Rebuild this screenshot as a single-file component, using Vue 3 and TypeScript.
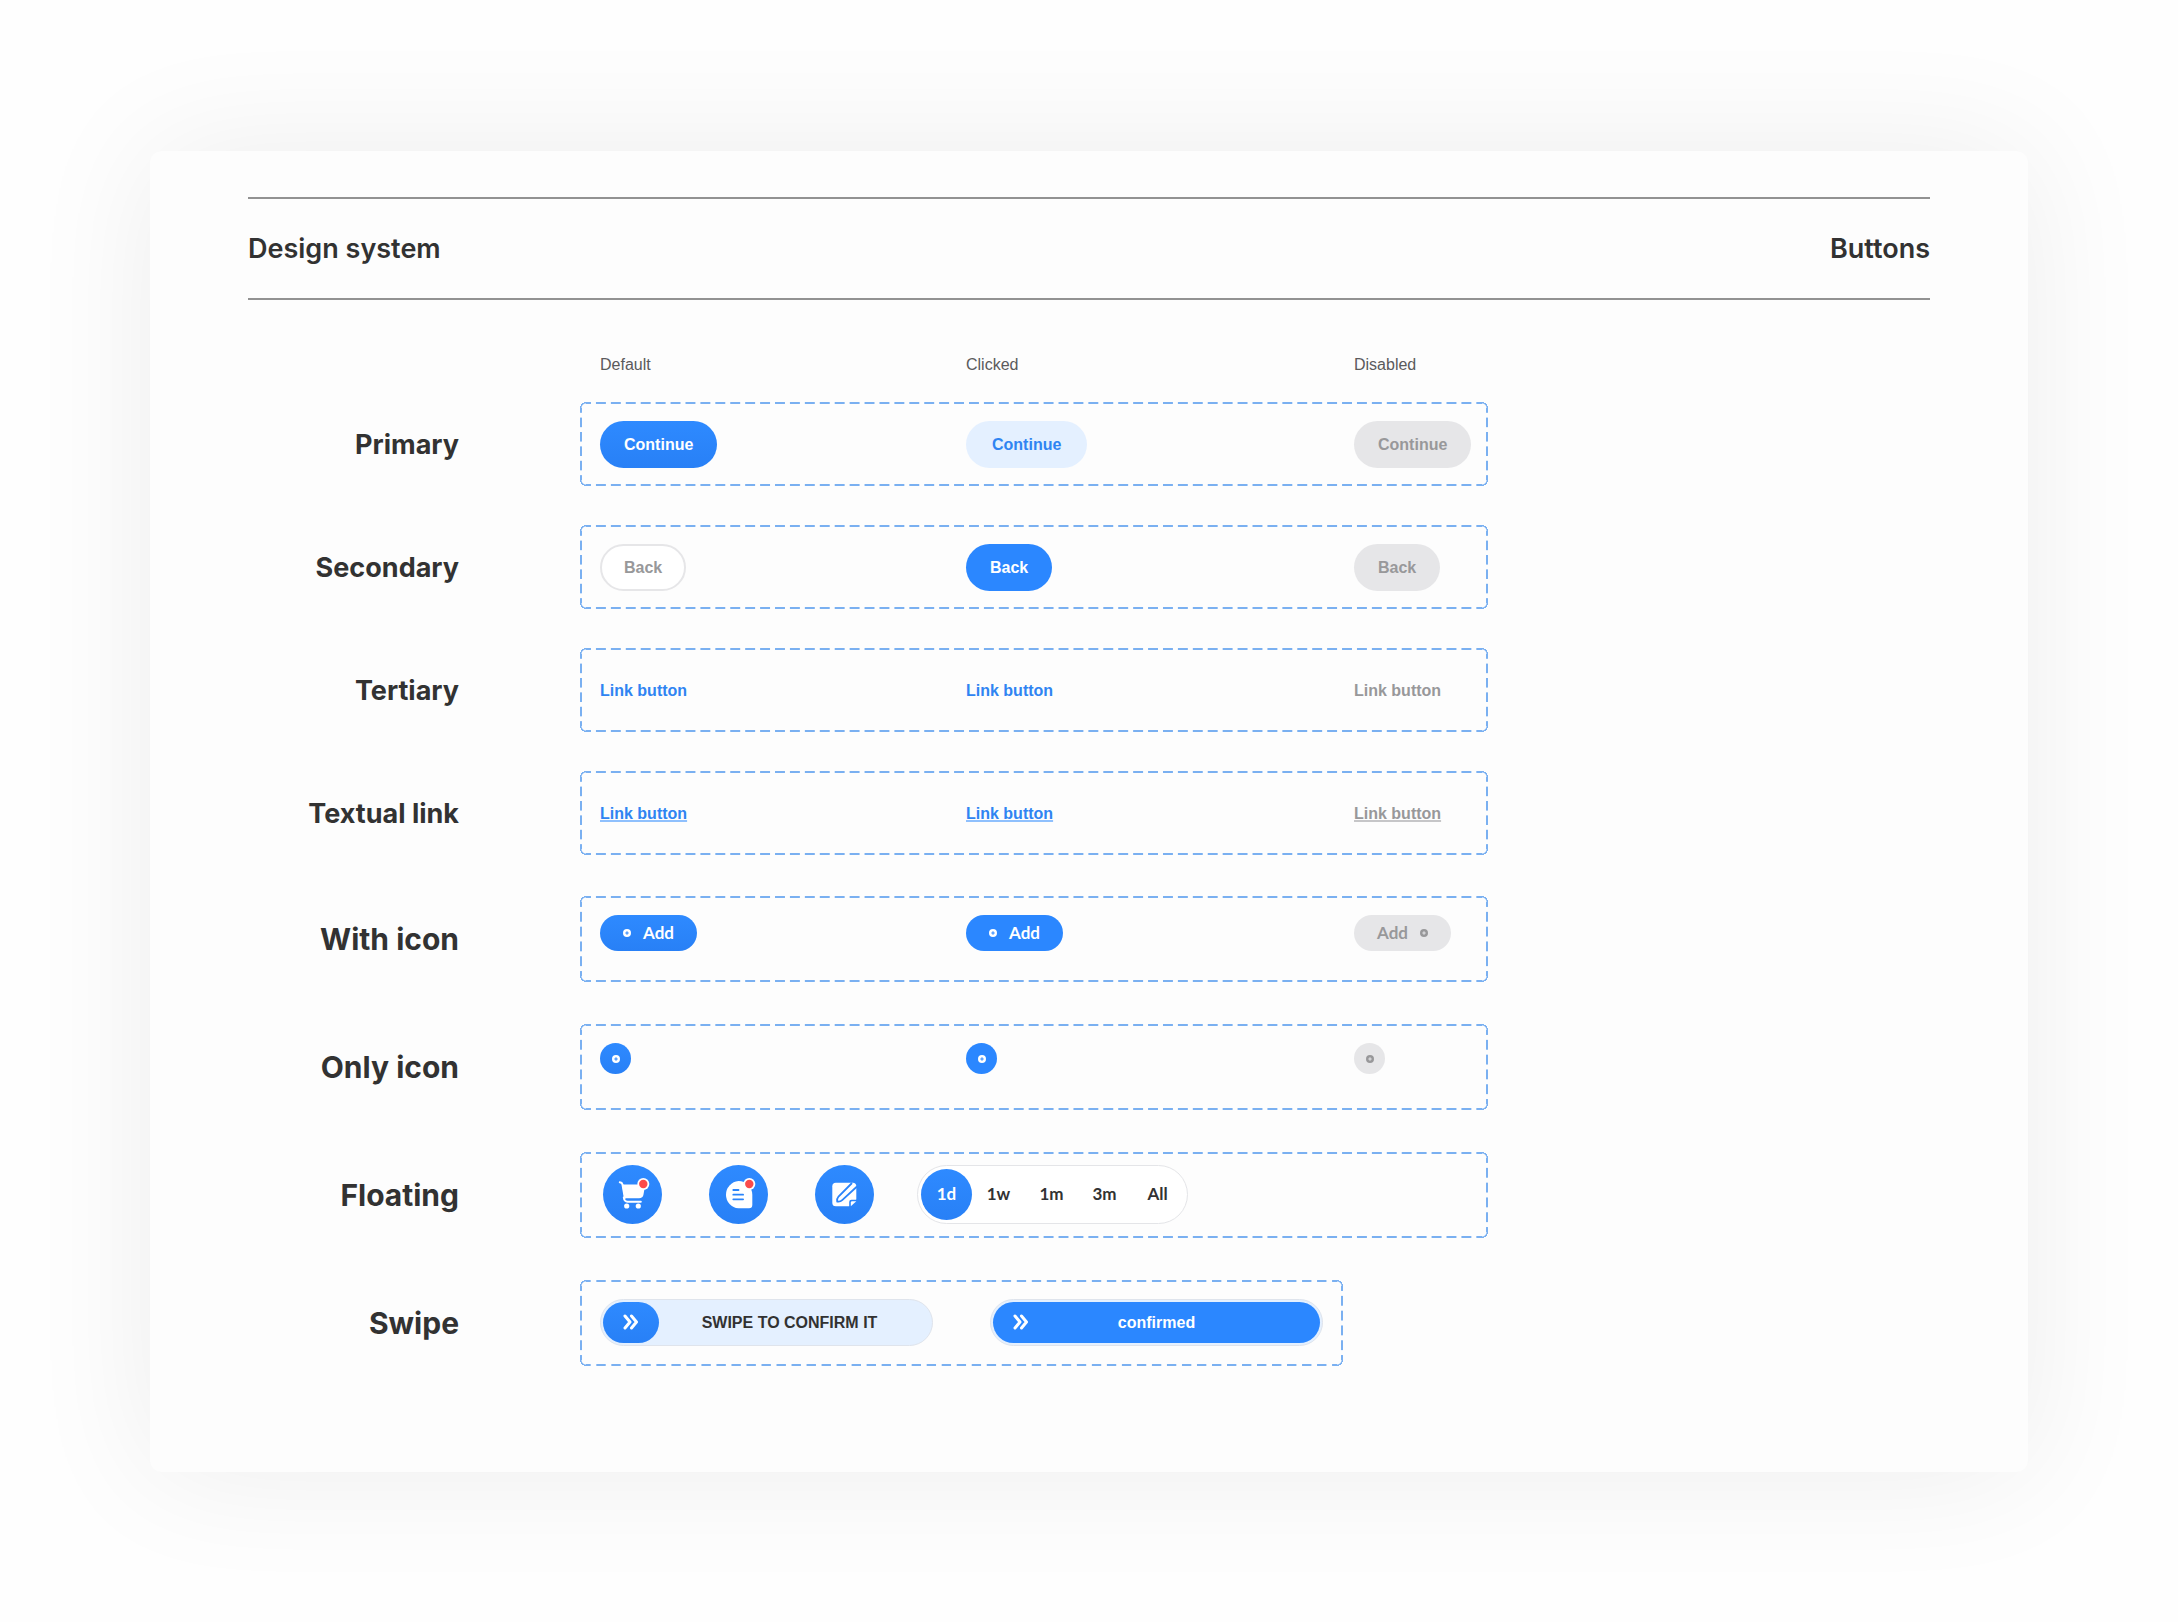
<script setup lang="ts">
import { ref } from 'vue'

const states = ['Default', 'Clicked', 'Disabled']
const periods = ['1d', '1w', '1m', '3m', 'All']
const period = ref('1d')

// Solid disc with a plus cut out of its centre.
const plus = 'M4 0a4 4 0 1 1 0 8a4 4 0 1 1 0-8zM3.5 2.3v1.2H2.3v1h1.2v1.2h1V4.5h1.2v-1H4.5V2.3z'
const chevrons = 'M2 2l5 6l-5 6M8.5 2l5 6l-5 6'
</script>

<template>
  <main class="page">
    <article class="card">
      <header class="head">
        <h1>Design system</h1>
        <p>Buttons</p>
      </header>

      <div class="row captions">
        <div class="states">
          <span v-for="s in states" :key="s">{{ s }}</span>
        </div>
      </div>

      <section class="group regular">
        <div class="row">
          <h2>Primary</h2>
          <div class="box states">
            <button type="button" class="btn fill">Continue</button>
            <button type="button" class="btn pale">Continue</button>
            <button type="button" class="btn off" disabled>Continue</button>
          </div>
        </div>
        <div class="row">
          <h2>Secondary</h2>
          <div class="box states">
            <button type="button" class="btn outline">Back</button>
            <button type="button" class="btn flat">Back</button>
            <button type="button" class="btn off" disabled>Back</button>
          </div>
        </div>
        <div class="row">
          <h2>Tertiary</h2>
          <div class="box states">
            <button type="button" class="btn text">Link button</button>
            <button type="button" class="btn text">Link button</button>
            <button type="button" class="btn text" disabled>Link button</button>
          </div>
        </div>
        <div class="row">
          <h2>Textual link</h2>
          <div class="box states">
            <a class="link" href="#default">Link button</a>
            <a class="link" href="#clicked">Link button</a>
            <a class="link muted" href="#disabled" aria-disabled="true">Link button</a>
          </div>
        </div>
      </section>

      <section class="group large">
        <div class="row">
          <h2>With icon</h2>
          <div class="box states">
            <button type="button" class="btn small fill">
              <svg class="plus" viewBox="0 0 8 8" aria-hidden="true"><path :d="plus" /></svg>
              Add
            </button>
            <button type="button" class="btn small flat">
              <svg class="plus" viewBox="0 0 8 8" aria-hidden="true"><path :d="plus" /></svg>
              Add
            </button>
            <button type="button" class="btn small off" disabled>
              Add
              <svg class="plus" viewBox="0 0 8 8" aria-hidden="true"><path :d="plus" /></svg>
            </button>
          </div>
        </div>
        <div class="row">
          <h2>Only icon</h2>
          <div class="box states">
            <button
              v-for="(s, i) in states"
              :key="s"
              type="button"
              class="dot"
              :class="['fill', 'flat', 'off'][i]"
              :disabled="s === 'Disabled'"
              aria-label="Add"
            >
              <svg class="plus" viewBox="0 0 8 8" aria-hidden="true"><path :d="plus" /></svg>
            </button>
          </div>
        </div>
        <div class="row">
          <h2>Floating</h2>
          <div class="box floating">
            <button type="button" class="fab fill" aria-label="Cart">
              <svg viewBox="0 0 59 59" aria-hidden="true">
                <path d="M16.8 17.3q2.2 .2 2.7 2.2l2.3 13.3" fill="none" stroke="#fff" stroke-width="2" stroke-linecap="round" />
                <path d="M19 19.500h22.500q.8 0 .6 1l-1.600 9q-.6 3.800-4.500 3.800H21.500z" fill="#fff" />
                <path d="M20.800 32.500q.5 4.200 3.700 4.200h13.300" fill="none" stroke="#fff" stroke-width="2" stroke-linecap="round" />
                <circle cx="23.7" cy="41" r="2.6" fill="#fff" />
                <circle cx="35.3" cy="41" r="2.6" fill="#fff" />
                <circle cx="40.3" cy="19" r="6" fill="#fff" />
                <circle cx="40.3" cy="19" r="4.2" fill="#fb4b4b" />
              </svg>
            </button>
            <button type="button" class="fab fill" aria-label="Messages">
              <svg viewBox="0 0 59 59" aria-hidden="true">
                <path d="M29.5 16a13.7 13.7 0 0 0 0 27.3h10.5q3.300 0 3.300-3.300V29.500A13.700 13.700 0 0 0 29.500 16z" fill="#fff" />
                <path d="M24.3 25h5.2M24.3 29.7h9.8M24.3 34.3h9.8" stroke="#2a84fb" stroke-width="1.8" stroke-linecap="round" />
                <circle cx="40.3" cy="19" r="6" fill="#fff" />
                <circle cx="40.3" cy="19" r="4.2" fill="#fb4b4b" />
              </svg>
            </button>
            <button type="button" class="fab fill" aria-label="Edit note">
              <svg viewBox="0 0 59 59" aria-hidden="true">
                <path d="M20.800 17.700h17q3.500 0 3.500 3.500V34.500L34.500 41.300H20.800q-3.500 0-3.500-3.500V21.200q0-3.500 3.500-3.500z" fill="#fff" />
                <path d="M37 18L23.500 31.500q-1.800 2-1.300 5q3 .5 5-1.300L42 21.500" fill="none" stroke="#2a84fb" stroke-width="1.800" />
                <path d="M34.200 42v-5q0-2.300 2.300-2.300H42L42 42z" fill="#2a84fb" />
                <path d="M35.800 41.300v-3.800q0-1.300 1.300-1.300h4.200z" fill="#fff" />
              </svg>
            </button>
            <div class="segments" role="group" aria-label="Period">
              <button
                v-for="p in periods"
                :key="p"
                type="button"
                :class="{ active: p === period }"
                :aria-pressed="p === period"
                @click="period = p"
              >{{ p }}</button>
            </div>
          </div>
        </div>
        <div class="row">
          <h2>Swipe</h2>
          <div class="box swipes">
            <button type="button" class="swipe">
              <span class="thumb">
                <svg class="chevrons" viewBox="0 0 16 16" aria-hidden="true"><path :d="chevrons" /></svg>
              </span>
              <span class="swipe-label">SWIPE TO CONFIRM IT</span>
            </button>
            <button type="button" class="swipe done">
              <span class="thumb">
                <svg class="chevrons" viewBox="0 0 16 16" aria-hidden="true"><path :d="chevrons" /></svg>
              </span>
              <span class="swipe-label">confirmed</span>
            </button>
          </div>
        </div>
      </section>
    </article>
  </main>
</template>

<style>
body {
  background: #fefefe;
}
</style>

<style scoped>
.page {
  --blue: #2b87ff;
  --dash: #7ab0f1;
  padding: 151px 150px 150px;
  font-family: "Liberation Sans", Arial, sans-serif;
  font-size: 16px;
  line-height: 24px;
  color: #323232;
}

.card {
  padding: 46px 98px 106px;
  border-radius: 12px;
  background: #fdfdfd;
  box-shadow: 0 0 130px rgba(0, 0, 0, 0.07);
}

h1,
h2,
p {
  margin: 0;
}

button {
  margin: 0;
  border: 0;
  padding: 0;
  background: none;
  color: inherit;
  font: inherit;
  font-weight: 700;
}

.head {
  display: flex;
  align-items: center;
  justify-content: space-between;
  height: 99px;
  border-top: 2px solid #929292;
  border-bottom: 2px solid #929292;
}

.head h1,
.head p {
  font-family: Inter, sans-serif;
  font-size: 27px;
  font-weight: 600;
  line-height: 36px;
}

.row {
  display: grid;
  grid-template-columns: 332fr 908fr 442fr;
  align-items: center;
}

.row h2 {
  padding-right: 121px;
  font-family: Inter, sans-serif;
  font-size: 27px;
  font-weight: 700;
  line-height: 36px;
  text-align: right;
  white-space: nowrap;
}

.states {
  display: grid;
  grid-template-columns: minmax(0, 366fr) minmax(0, 388fr) minmax(0, 118fr);
  align-items: center;
  justify-items: start;
  padding: 0 16px 0 20px;
}

.captions {
  margin: 53px 0 25px;
  color: #5a5a5c;
}

.captions .states {
  grid-column: 2;
}

.group {
  display: grid;
  gap: 39px;
}

.regular h2,
.link {
  padding-top: 2px;
}

.box {
  position: relative;
  box-sizing: border-box;
  height: 84px;
  background:
    radial-gradient(circle at 100% 100%, transparent 4px, var(--dash) 5px, var(--dash) 6px, transparent 6px) 0 0 / 6px 6px no-repeat,
    radial-gradient(circle at 0 100%, transparent 4px, var(--dash) 5px, var(--dash) 6px, transparent 6px) 100% 0 / 6px 6px no-repeat,
    radial-gradient(circle at 100% 0, transparent 4px, var(--dash) 5px, var(--dash) 6px, transparent 6px) 0 100% / 6px 6px no-repeat,
    radial-gradient(circle at 0 0, transparent 4px, var(--dash) 5px, var(--dash) 6px, transparent 6px) 100% 100% / 6px 6px no-repeat;
}

/* Dashed edges: each side repeats a 15px tile, half a dash at either end. */
.box::before,
.box::after {
  content: "";
  position: absolute;
  pointer-events: none;
}

.box::before {
  inset: 0 6px;
  background:
    linear-gradient(90deg, var(--dash) 5px, transparent 5px, transparent 10px, var(--dash) 10px) 0 0 / 15px 2px round no-repeat,
    linear-gradient(90deg, var(--dash) 5px, transparent 5px, transparent 10px, var(--dash) 10px) 0 100% / 15px 2px round no-repeat;
}

.box::after {
  inset: 6px 0;
  background:
    linear-gradient(var(--dash) 5px, transparent 5px, transparent 10px, var(--dash) 10px) 0 0 / 2px 15px no-repeat round,
    linear-gradient(var(--dash) 5px, transparent 5px, transparent 10px, var(--dash) 10px) 100% 0 / 2px 15px no-repeat round;
}

.large {
  gap: 42px;
  margin-top: 41px;
}

.large .box {
  height: 86px;
}

.large .states {
  align-items: start;
  padding-top: 19px;
}

.large h2 {
  font-size: 30px;
}

.btn {
  display: flex;
  align-items: center;
  box-sizing: border-box;
  height: 47px;
  padding: 2px 24px 0;
  border-radius: 24px;
  white-space: nowrap;
}

.fill {
  background: linear-gradient(#2e8aff, #2880f6);
  color: #fff;
}

.flat {
  background: var(--blue);
  color: #fff;
}

.pale {
  padding: 2px 26px 0;
  background: #e4f0ff;
  color: #2f84f2;
}

.off {
  background: #e6e6e8;
  color: #98989a;
}

.outline {
  padding: 2px 22px 0;
  border: 2px solid #e6e6e8;
  background: #fff;
  color: #98989a;
}

.text {
  padding: 2px 0 0;
  color: #2f84f2;
}

.text:disabled {
  color: #98989a;
}

.link {
  color: #2f84f2;
  font-weight: 700;
  text-decoration: underline 2px #8fc0fd;
  text-decoration-skip-ink: none;
  text-underline-offset: 1px;
}

.muted {
  color: #98989a;
  text-decoration-color: #c6c6c8;
}

.small {
  gap: 12px;
  height: 36px;
  padding: 0 23px;
  border-radius: 18px;
  font-family: Lato, sans-serif;
  font-size: 17px;
}

.plus {
  width: 8px;
  height: 8px;
  fill: currentColor;
  fill-rule: evenodd;
}

.dot {
  display: flex;
  align-items: center;
  justify-content: center;
  width: 31px;
  height: 31px;
  border-radius: 50%;
}

.floating {
  display: flex;
  align-items: center;
  gap: 47px;
  padding: 0 0 2px 23px;
}

.fab {
  flex: none;
  width: 59px;
  height: 59px;
  border-radius: 50%;
}

.fab svg {
  display: block;
  width: 59px;
  height: 59px;
}

.segments {
  display: flex;
  align-items: center;
  box-sizing: border-box;
  height: 59px;
  margin-left: -4px;
  padding: 0 3px;
  border: 1px solid #e4e5e8;
  border-radius: 30px;
  background: #fff;
  font-family: Lato, sans-serif;
  font-size: 17px;
}

.segments button {
  width: 53px;
  height: 51px;
  border-radius: 26px;
}

.segments .active {
  width: 51px;
  background: linear-gradient(#2e8aff, #2880f6);
  color: #fff;
}

.swipes {
  display: flex;
  align-items: center;
  justify-self: start;
  gap: 57px;
  padding: 0 20px 2px;
}

.swipe {
  display: flex;
  align-items: center;
  box-sizing: border-box;
  width: 333px;
  height: 47px;
  padding: 0 2px;
  border: 1px solid #dfe4ec;
  border-radius: 24px;
  background: #e4f0ff;
}

.thumb {
  display: flex;
  align-items: center;
  justify-content: center;
  width: 56px;
  height: 41px;
  border-radius: 21px;
  background: linear-gradient(#2e8aff, #2880f6);
}

.chevrons {
  width: 16px;
  height: 16px;
  fill: none;
  stroke: #fff;
  stroke-width: 3;
  stroke-linecap: round;
  stroke-linejoin: round;
}

.swipe-label {
  flex: 1;
  padding-right: 10px;
  line-height: 41px;
  text-align: center;
}

.done {
  color: #fff;
}

.done .thumb {
  border-radius: 21px 0 0 21px;
  background: var(--blue);
}

.done .swipe-label {
  padding-right: 56px;
  border-radius: 0 21px 21px 0;
  background: var(--blue);
}
</style>
